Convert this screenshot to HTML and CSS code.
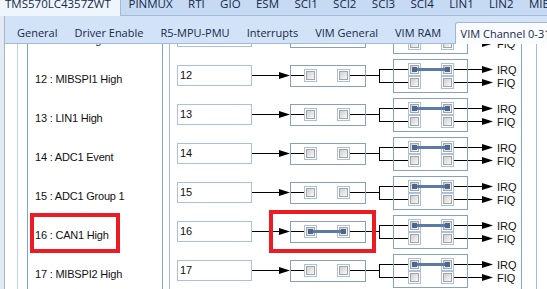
FILE: index.html
```html
<!DOCTYPE html>
<html lang="en">
<head>
    <meta charset="UTF-8">
    <meta name="viewport" content="width=device-width, initial-scale=1.0">
    <title>VIM Channel 0-31</title>
    <link rel="stylesheet" href="styles.css">
</head>
<body>

    <div class="window">
        <div class="outer-tabs">
            <div class="otab active">TMS570LC4357ZWT</div>
            <div class="otab">PINMUX</div>
            <div class="otab">RTI</div>
            <div class="otab">GIO</div>
            <div class="otab">ESM</div>
            <div class="otab">SCI1</div>
            <div class="otab">SCI2</div>
            <div class="otab">SCI3</div>
            <div class="otab">SCI4</div>
            <div class="otab">LIN1</div>
            <div class="otab">LIN2</div>
            <div class="otab">MIBSPI1</div>
        </div>

        <div class="panel">
            <div class="inner-tabs">
                <div class="itab">General</div>
                <div class="itab">Driver Enable</div>
                <div class="itab">R5-MPU-PMU</div>
                <div class="itab">Interrupts</div>
                <div class="itab">VIM General</div>
                <div class="itab">VIM RAM</div>
                <div class="itab active">VIM Channel 0-31</div>
            </div>

            <div class="content">
                <div class="sheet">
                    <div class="rail rail-a"></div>
                    <div class="rail rail-b"></div>

                    <div class="labels">
                        <div class="label">11 : HTU1 High</div>
                        <div class="label">12 : MIBSPI1 High</div>
                        <div class="label">13 : LIN1 High</div>
                        <div class="label">14 : ADC1 Event</div>
                        <div class="label">15 : ADC1 Group 1</div>
                        <div class="label marked">16 : CAN1 High</div>
                        <div class="label">17 : MIBSPI2 High</div>
                    </div>

                    <div class="rail rail-c"></div>

                    <div class="wires">
                        <div class="wire-row">
                            <div class="num">11</div>
                            <svg class="wire" viewBox="0 0 268 39"><use href="#wire"/><text x="245" y="14.5">IRQ</text><text x="245" y="27.5">FIQ</text></svg>
                        </div>
                        <div class="wire-row">
                            <div class="num">12</div>
                            <svg class="wire" viewBox="0 0 268 39"><use href="#wire"/><text x="245" y="14.5">IRQ</text><text x="245" y="27.5">FIQ</text></svg>
                        </div>
                        <div class="wire-row">
                            <div class="num">13</div>
                            <svg class="wire" viewBox="0 0 268 39"><use href="#wire"/><text x="245" y="14.5">IRQ</text><text x="245" y="27.5">FIQ</text></svg>
                        </div>
                        <div class="wire-row">
                            <div class="num">14</div>
                            <svg class="wire" viewBox="0 0 268 39"><use href="#wire"/><text x="245" y="14.5">IRQ</text><text x="245" y="27.5">FIQ</text></svg>
                        </div>
                        <div class="wire-row">
                            <div class="num">15</div>
                            <svg class="wire" viewBox="0 0 268 39"><use href="#wire"/><text x="245" y="14.5">IRQ</text><text x="245" y="27.5">FIQ</text></svg>
                        </div>
                        <div class="wire-row">
                            <div class="num">16</div>
                            <svg class="wire" viewBox="0 0 268 39"><use href="#wire"/><use href="#link-mid"/><rect class="mark" x="19" y="-3" width="103" height="39"/><text x="245" y="14.5">IRQ</text><text x="245" y="27.5">FIQ</text></svg>
                        </div>
                        <div class="wire-row">
                            <div class="num">17</div>
                            <svg class="wire" viewBox="0 0 268 39"><use href="#wire"/><text x="245" y="14.5">IRQ</text><text x="245" y="27.5">FIQ</text></svg>
                        </div>
                    </div>

                    <div class="rail rail-d"></div>
                </div>
            </div>
        </div>
    </div>

    <!-- shared drawing parts for the channel rows -->
    <svg class="defs" width="0" height="0">
        <defs>
            <linearGradient id="cbFill" x1="0" y1="0" x2="1" y2="1">
                <stop offset="0" stop-color="#cdcdcd"/>
                <stop offset="1" stop-color="#fbfbfb"/>
            </linearGradient>
            <g id="cb">
                <rect x="0.5" y="0.5" width="12" height="12" fill="#fff" stroke="#a9c0de"/>
                <rect x="2.5" y="2.5" width="8" height="8" fill="url(#cbFill)" stroke="#a4a4a4"/>
            </g>
            <g id="wire">
                <path d="M0 16.5H28M38 16.5H52M98 16.5H128M127.5 10V24M127.5 10.5H141M127.5 23.5H141M142 10.5H156M142 23.5H156M202 10.5H230M202 23.5H230" stroke="#000" fill="none"/>
                <polygon points="27,13 38,16.5 27,20" fill="#000"/>
                <polygon points="230,7 241,10.5 230,14" fill="#000"/>
                <polygon points="230,20 241,23.5 230,27" fill="#000"/>
                <rect x="38.5" y="6.5" width="75" height="21" fill="none" stroke="#87a0be"/>
                <rect x="141.5" y="0.5" width="74" height="33" fill="none" stroke="#87a0be"/>
                <use href="#cb" x="52" y="10"/>
                <use href="#cb" x="85" y="10"/>
                <use href="#cb" x="156" y="4"/>
                <use href="#cb" x="189" y="4"/>
                <use href="#cb" x="156" y="17"/>
                <use href="#cb" x="189" y="17"/>
                <path d="M162.5 10.5H195.5" stroke="#5b7aa8" stroke-width="3"/>
                <rect x="160" y="8" width="5" height="5" fill="#4a6894"/>
                <rect x="193" y="8" width="5" height="5" fill="#4a6894"/>
            </g>
            <g id="link-mid">
                <path d="M58.5 16.5H91.5" stroke="#5b7aa8" stroke-width="3"/>
                <rect x="56" y="14" width="5" height="5" fill="#4a6894"/>
                <rect x="89" y="14" width="5" height="5" fill="#4a6894"/>
            </g>
        </defs>
    </svg>

</body>
</html>
```

FILE: styles.css
```css
body {
    margin: 0;
    padding: 0;
    width: 547px;
    height: 289px;
    overflow: hidden;
    background-color: #e2eaf4;
    font-family: "Open Sans", Arial, sans-serif;
    color: #15294b;
}

.window {
    width: 547px;
    height: 289px;
    overflow: hidden;
}

/* Top level tabs */
.outer-tabs {
    display: flex;
    height: 15px;
    background-color: #c6daf3;
    border-bottom: 1px solid #a3bcdc;
    white-space: nowrap;
}

.otab {
    height: 15px;
    padding: 0 7.7px;
    font-size: 11.5px;
    line-height: 8px;
}

.otab.active {
    height: 16px;
    margin-bottom: -1px;
    padding: 0 9px 0 5px;
    background-color: #eff5fc;
    border-right: 1px solid #a3bad8;
}

.panel {
    margin-left: 4px;
    border-left: 1px solid #aab5c3;
    background-color: #d3e3f7;
}

/* Second row of tabs */
.inner-tabs {
    display: flex;
    align-items: flex-end;
    height: 27px;
    padding-left: 3.5px;
    border-bottom: 1px solid #a2bbdc;
    white-space: nowrap;
}

.itab {
    height: 21px;
    padding: 0 8.5px;
    font-size: 11px;
    line-height: 21px;
}

.itab.active {
    height: 21px;
    margin-left: 5px;
    margin-bottom: -1px;
    padding: 0 6px 0 5px;
    background-color: #f9fbfe;
    border: 1px solid #9fb7d7;
    border-bottom: none;
    border-top-left-radius: 3px;
}

/* Scrolled channel sheet */
.content {
    height: 245px;
    overflow: hidden;
    background-color: #fff;
}

.sheet {
    display: flex;
    margin-top: -24px;
    height: 300px;
}

.rail {
    flex: none;
}

.rail-a {
    width: 12px;
    border-right: 1px solid #c0d3ec;
}

.rail-b {
    width: 9px;
    border-right: 1px solid #7fa4d6;
}

.rail-c {
    width: 6px;
    border-right: 1px solid #9ebbe1;
}

.rail-d {
    width: 14px;
    border-right: 1px solid #9ebbe1;
}

.labels {
    flex: none;
    width: 134px;
    border-right: 1px solid #7fa4d6;
}

.label {
    position: relative;
    display: flex;
    align-items: center;
    height: 39px;
    padding: 1px 0 0 7px;
    box-sizing: border-box;
    font-family: "Liberation Sans", Arial, sans-serif;
    font-size: 11px;
    letter-spacing: -0.2px;
    color: #111;
}

/* red highlight drawn over the row */
.label.marked::after {
    content: "";
    position: absolute;
    left: 2px;
    top: -2px;
    width: 90px;
    height: 40px;
    border: 4px solid #ec1c24;
    box-sizing: border-box;
}

.wires {
    flex: none;
    width: 351px;
    border-right: 1px solid #7fa4d6;
}

.wire-row {
    display: flex;
    align-items: flex-start;
    height: 39px;
    padding-left: 7px;
}

.num {
    width: 75px;
    height: 21px;
    margin-top: 6px;
    padding-left: 2px;
    box-sizing: border-box;
    border: 1px solid #a7c1e3;
    font-family: "Liberation Sans", Arial, sans-serif;
    font-size: 11px;
    line-height: 19px;
    color: #111;
}

.wire {
    display: block;
    width: 268px;
    height: 39px;
    overflow: visible;
}

.wire text {
    font-family: "Liberation Sans", Arial, sans-serif;
    font-size: 11px;
    fill: #111;
}

.wire .mark {
    fill: none;
    stroke: #ec1c24;
    stroke-width: 4;
}

.defs {
    display: block;
    width: 0;
    height: 0;
    overflow: hidden;
}
```
